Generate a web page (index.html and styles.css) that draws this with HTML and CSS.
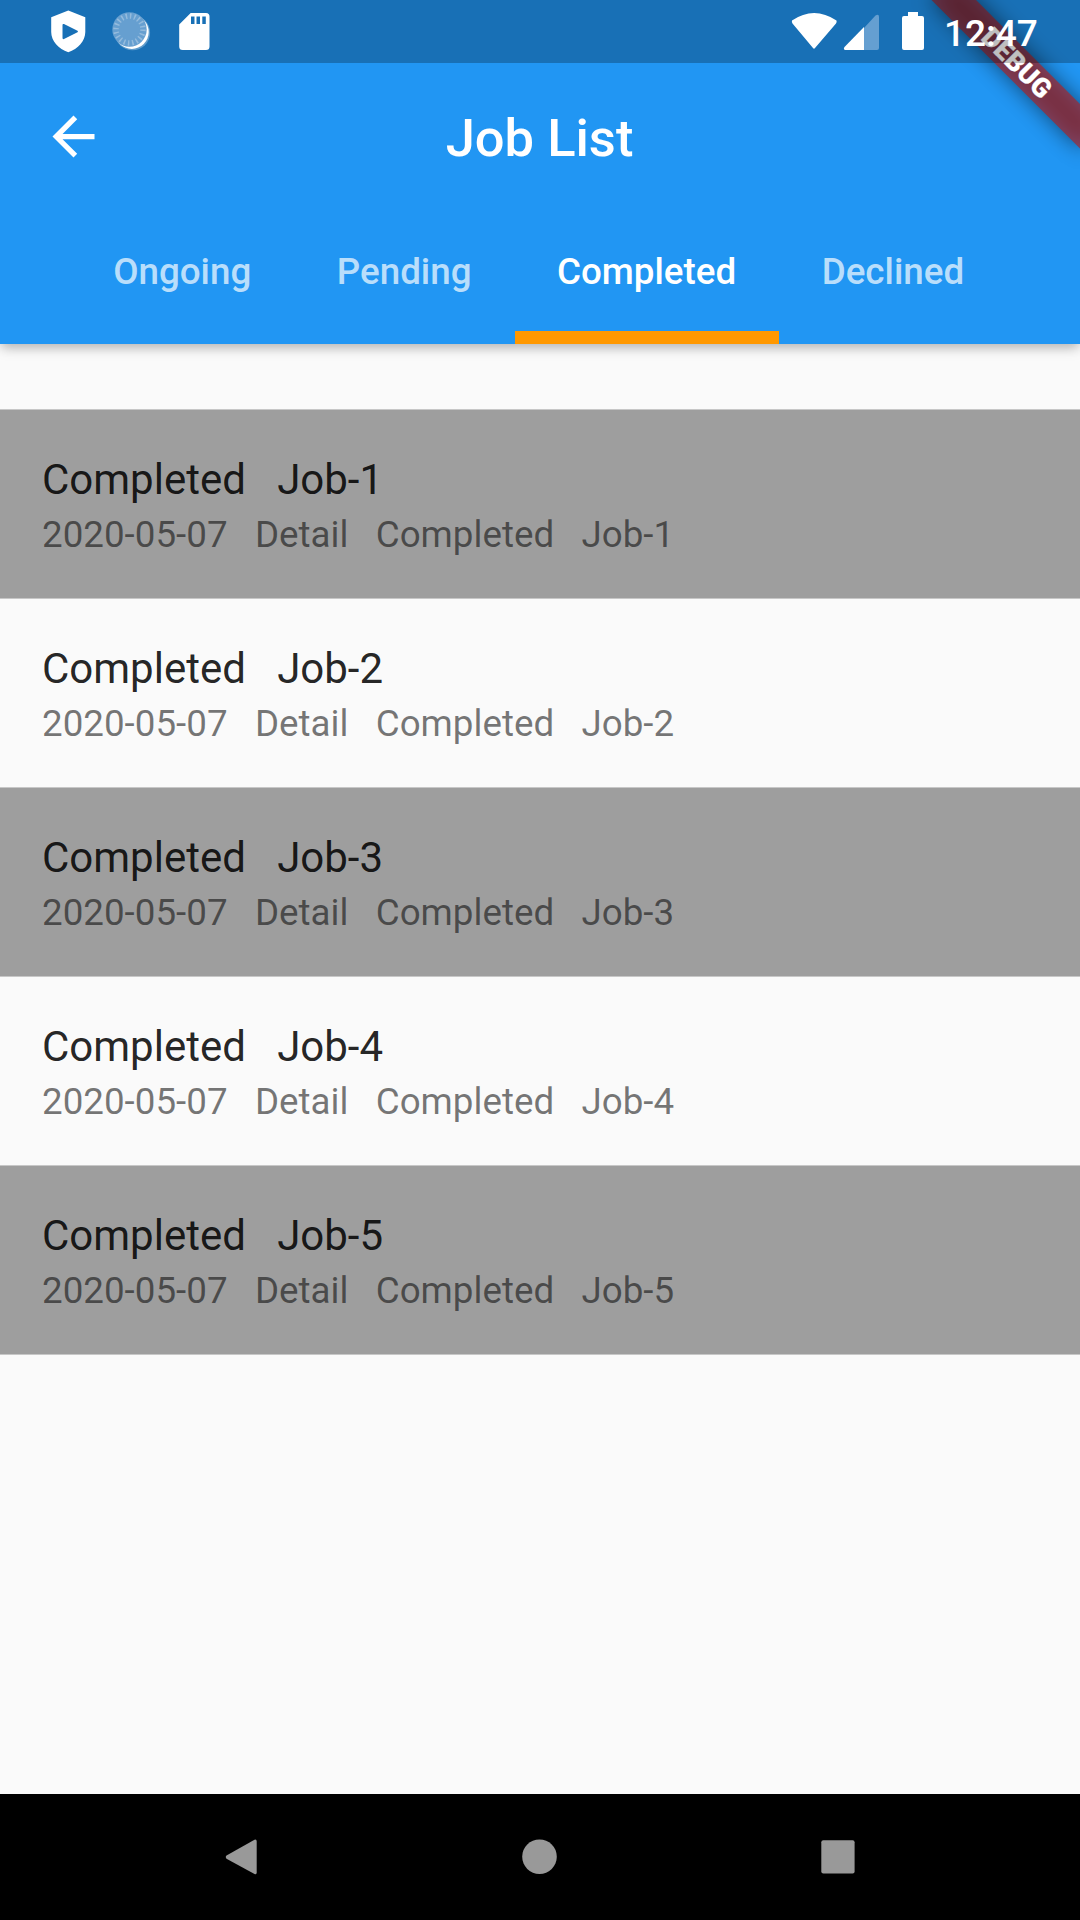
FILE: index.html
```html
<!DOCTYPE html>
<html lang="en">
<head>
<meta charset="utf-8">
<title>Job List</title>
<link rel="stylesheet" href="styles.css">
</head>
<body>
<div class="screen">
  <header class="app-bar">
    <div class="status-bar">
      <svg class="status-left" width="240" height="63" viewBox="0 0 240 63">
        <path fill="#fff" fill-rule="evenodd" d="M68.300 10.500 85.300 17.300V32C85.300 41 78 49 68.300 52.200 58.500 49 51.200 41 51.200 32V17.300ZM64 24Q62.500 23.500 62.500 25V38Q62.500 39.500 64 39L77.500 32.300Q78.500 31.500 77.500 30.700Z"/>
        <circle cx="132.500" cy="32.700" r="17.600" fill="#fff" opacity=".3"/>
        <circle cx="131.800" cy="32" r="16.900" fill="#fff"/>
        <circle cx="129.500" cy="29.500" r="17.200" fill="#669fd0"/>
        <circle cx="129.500" cy="29.500" r="13.500" fill="none" stroke="#94bbdd" stroke-width="5.500" stroke-dasharray="1.500 2.741"/>
        <path fill="#fff" fill-rule="evenodd" d="M190.700 13H206Q209.500 13 209.500 16.500V46.500Q209.500 50 206 50H182.700Q179.200 50 179.200 46.500V24.500ZM191 16.500V24H194.500V16.500ZM196.500 16.500V24H200V16.500ZM202.300 16.500V24H205.800V16.500Z"/>
      </svg>
      <svg class="status-right" width="140" height="63" viewBox="790 0 140 63">
        <path fill="#fff" d="M792 20.500Q814 5.500 836.500 20.500 837 22 836 23.500L815 48Q814 49.300 813 48L792.500 23.500Q791.500 22 792 20.500Z"/>
        <path fill="#659fd1" d="M864 28 875.500 15.500Q879 13.500 879 17V48Q879 50 877 50H864Z"/>
        <path fill="#fff" d="M864 27V50H845Q843 49 844.500 47Z"/>
        <path fill="#fff" d="M908 12H918V16H922Q924 16 924 18V48Q924 50 922 50H904Q902 50 902 48V18Q902 16 904 16H908Z"/>
      </svg>
      <span class="clock">12:47</span>
    </div>
    <div class="toolbar">
      <svg class="back" width="63" height="63" viewBox="0 0 24 24"><path fill="#fff" d="M20 11H7.830l5.590-5.590L12 4l-8 8 8 8 1.410-1.410L7.830 13H20v-2z"/></svg>
      <h1 class="title">Job List</h1>
    </div>
    <nav class="tabs">
      <a class="tab">Ongoing</a>
      <a class="tab">Pending</a>
      <a class="tab active">Completed</a>
      <a class="tab">Declined</a>
    </nav>
    <svg class="debug-banner" width="220" height="220" viewBox="-220 0 220 220">
      <defs>
        <filter id="soft" x="-30%" y="-100%" width="160%" height="300%"><feGaussianBlur stdDeviation="10.400"/></filter>
      </defs>
      <g transform="rotate(45)">
        <rect x="-105" y="73.500" width="210" height="31.500" fill="#000" opacity=".5" filter="url(#soft)"/>
        <rect x="-105" y="73.500" width="210" height="31.500" fill="#b71c1c" opacity=".627"/>
        <text class="debug-text" x="0" y="98.500" text-anchor="middle">DEBUG</text>
      </g>
    </svg>
  </header>
  <main class="jobs">
    <article class="job shaded"><h2>Completed   Job-1</h2><p>2020-05-07   Detail   Completed   Job-1</p></article>
    <article class="job"><h2>Completed   Job-2</h2><p>2020-05-07   Detail   Completed   Job-2</p></article>
    <article class="job shaded"><h2>Completed   Job-3</h2><p>2020-05-07   Detail   Completed   Job-3</p></article>
    <article class="job"><h2>Completed   Job-4</h2><p>2020-05-07   Detail   Completed   Job-4</p></article>
    <article class="job shaded"><h2>Completed   Job-5</h2><p>2020-05-07   Detail   Completed   Job-5</p></article>
  </main>
  <footer class="nav-bar">
    <svg width="36" height="36" viewBox="0 0 36 36"><path fill="#999" d="M2.500 16.500 30.500 .8Q32.700 0 32.700 2.500V33.500Q32.700 36 30.500 35L2.500 19.700Q1 18 2.500 16.500Z"/></svg>
    <svg width="36" height="36" viewBox="0 0 36 36"><circle cx="17.500" cy="17.700" r="17.300" fill="#999"/></svg>
    <svg width="36" height="36" viewBox="0 0 36 36"><rect x="1.300" y="1.300" width="33.300" height="33.300" rx="2" fill="#999"/></svg>
  </footer>
</div>
</body>
</html>
```
FILE: styles.css
```css
* { box-sizing: border-box; margin: 0; padding: 0; }

body { font-family: Roboto, sans-serif; background: #fafafa; }

.screen {
  display: flex;
  flex-direction: column;
  width: 1080px;
  height: 1920px;
  overflow: hidden;
}

.app-bar {
  position: relative;
  height: 344px;
  background: #2196f3;
  color: #fff;
  box-shadow: 0 5px 10px -2px rgba(0, 0, 0, .2), 0 4px 14px rgba(0, 0, 0, .12);
}

.status-bar {
  position: relative;
  z-index: 2;
  display: flex;
  align-items: center;
  height: 63px;
  background: rgba(0, 0, 0, .25);
}

.status-right { margin-left: 550px; }

.clock {
  margin-left: 14px;
  padding-top: 4px;
  font-size: 37px;
  font-weight: 500;
  line-height: 59px;
}

.toolbar {
  display: grid;
  grid-template-columns: 147px 1fr 147px;
  align-items: center;
  height: 147px;
}

.back { margin-left: 42px; }

.title {
  padding: 2px 1px 0 0;
  font-size: 52.5px;
  font-weight: 500;
  line-height: 62px;
  text-align: center;
}

.tabs {
  display: flex;
  justify-content: center;
  height: 134px;
  padding-right: 2px;
}

.tab {
  height: 134px;
  padding: 0 43.1px 0 42.4px;
  border-bottom: 13px solid transparent;
  font-size: 36.75px;
  font-weight: 500;
  line-height: 124px;
  color: rgba(255, 255, 255, .7);
}

.tab.active { color: #fff; border-color: #ff9800; }

.debug-banner { position: absolute; top: 0; right: 0; z-index: 1; }

.debug-text {
  font-size: 26.775px;
  font-weight: 900;
  letter-spacing: .2px;
  fill: #fff;
  stroke: #fff;
  stroke-width: .2px;
}

.jobs {
  flex: 1;
  padding-top: 65px;
}

.job {
  height: 189px;
  padding: 42px 42px 0;
  border-bottom: 1px solid #c7c7c7;
  white-space: pre;
}

.job:first-child {
  height: 190px;
  border-top: 1px solid #c7c7c7;
}

.shaded { background: #9e9e9e; }

.job h2 {
  font-size: 42px;
  font-weight: 400;
  line-height: 56px;
  color: rgba(0, 0, 0, .87);
}

.job p {
  font-size: 36.75px;
  line-height: 54px;
  color: rgba(0, 0, 0, .54);
}

.nav-bar {
  display: flex;
  justify-content: space-between;
  height: 126px;
  padding: 45px 224px 0;
  background: #000;
}
```
